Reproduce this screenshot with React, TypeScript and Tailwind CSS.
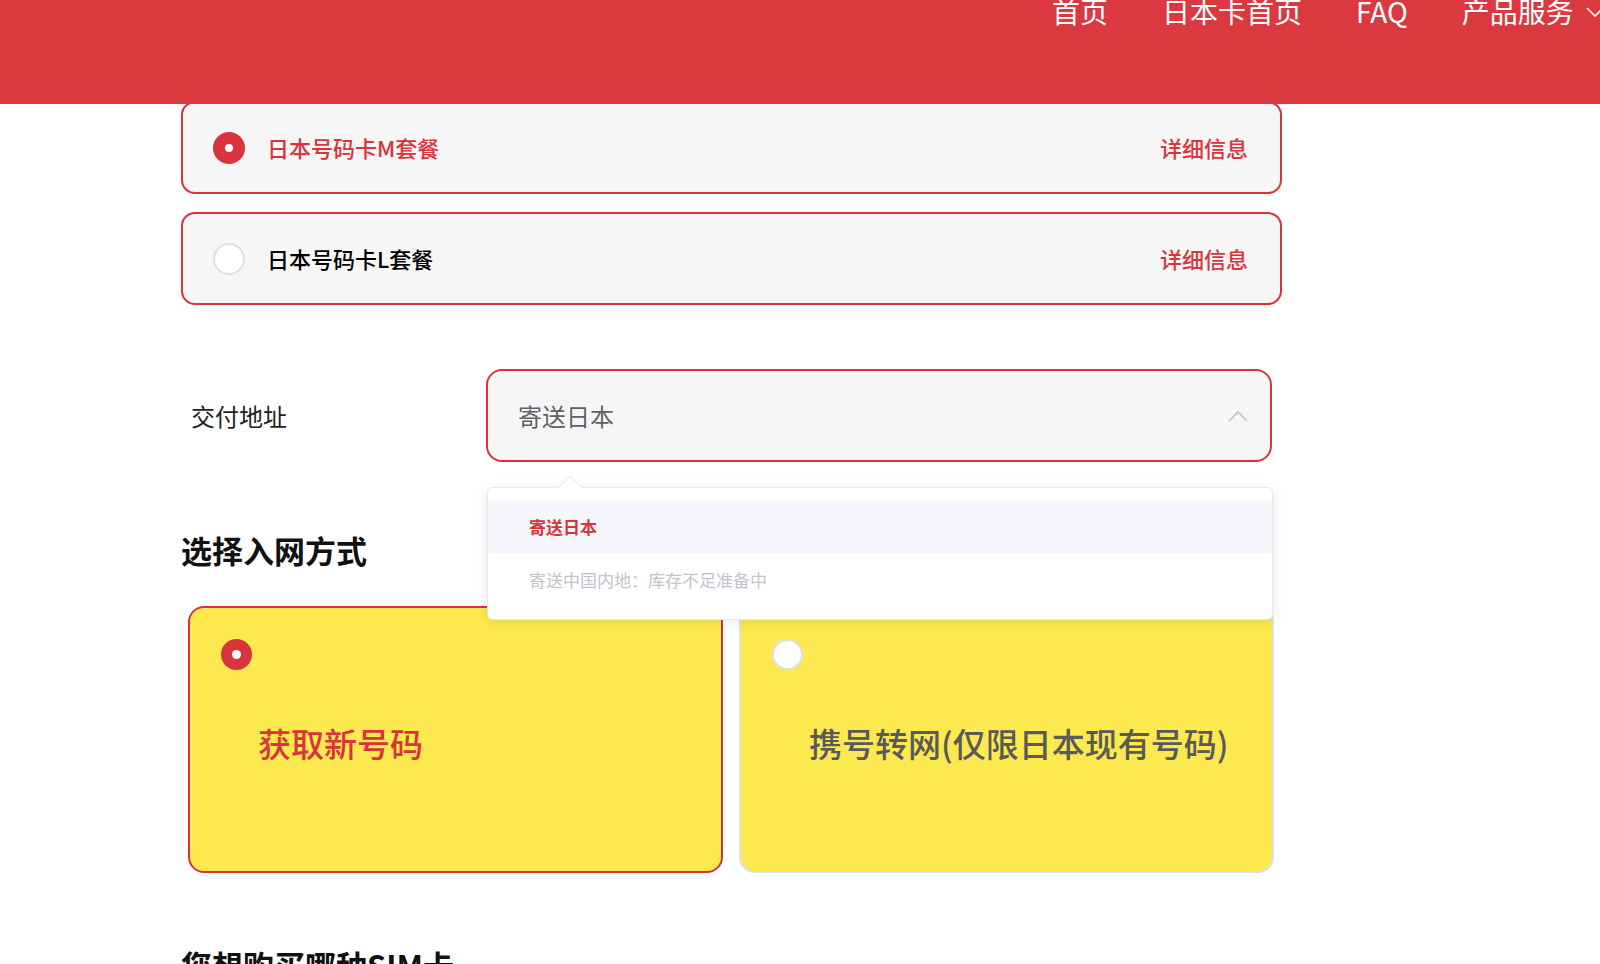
import React from "react";

function PlanRadio({ checked }: { checked: boolean }) {
  return checked ? (
    <span className="flex h-[32px] w-[32px] shrink-0 items-center justify-center rounded-full bg-[#d9343c]">
      <span className="h-[8px] w-[8px] rounded-full bg-white" />
    </span>
  ) : (
    <span className="h-[32px] w-[32px] shrink-0 rounded-full border-2 border-[#dcdfe6] bg-white" />
  );
}

function CardRadio({ checked }: { checked: boolean }) {
  return checked ? (
    <span className="flex h-[31px] w-[31px] shrink-0 items-center justify-center rounded-full bg-[#d9343c]">
      <span className="h-[9px] w-[9px] rounded-full bg-white" />
    </span>
  ) : (
    <span className="block h-[31px] w-[31px] shrink-0 rounded-full border-2 border-[#dcdfe6] bg-white" />
  );
}

export default function App() {
  return (
    <div className="relative h-[964px] w-[1600px] overflow-hidden bg-white font-['Noto_Sans_CJK_SC','Noto_Sans',sans-serif]">
      <header className="absolute left-0 top-0 z-20 h-[104px] w-full overflow-hidden bg-[#dc3840]">
        <nav className="-mt-[3px] flex items-start gap-[54px] whitespace-nowrap pl-[1052px] text-[28px] leading-[28px] text-white">
          <span>首页</span>
          <span>日本卡首页</span>
          <span>FAQ</span>
          <span className="flex items-start gap-[12px]">
            产品服务
            <svg width="18" height="12" viewBox="0 0 18 12" className="mt-[9px]">
              <path d="M1 2 L9 10 L17 2" fill="none" stroke="white" strokeWidth="1.6" />
            </svg>
          </span>
        </nav>
      </header>

      <main className="pl-[181px] pt-[101px]">
        <div className="w-[1101px]">
          <div className="flex h-[93px] items-center rounded-[14px] border-2 border-[#d9343c] bg-[#f6f6f6] pl-[30px] pr-[32px]">
            <PlanRadio checked />
            <span className="ml-[22px] text-[22px] font-medium text-[#d9343c]">日本号码卡M套餐</span>
            <span className="ml-auto text-[22px] font-medium text-[#d9343c]">详细信息</span>
          </div>
          <div className="mt-[18px] flex h-[93px] items-center rounded-[14px] border-2 border-[#d9343c] bg-[#f6f6f6] pl-[30px] pr-[32px]">
            <PlanRadio checked={false} />
            <span className="ml-[22px] text-[22px] font-medium text-black">日本号码卡L套餐</span>
            <span className="ml-auto text-[22px] font-medium text-[#d9343c]">详细信息</span>
          </div>

          <div className="mt-[64px] flex items-center">
            <div className="w-[305px] pl-[10px] text-[24px] text-[#222]">交付地址</div>
            <div className="relative">
              <div className="flex h-[93px] w-[786px] items-center rounded-[16px] border-2 border-[#d9343c] bg-[#f6f6f6] pl-[30px] pr-[22px]">
                <span className="text-[24px] text-[#606266]">寄送日本</span>
                <svg width="20" height="12" viewBox="0 0 20 12" className="ml-auto">
                  <path d="M1 11 L10 2 L19 11" fill="none" stroke="#c0c4cc" strokeWidth="1.6" />
                </svg>
              </div>
              <div className="absolute left-[1px] top-[118px] z-10 w-[786px] rounded-[6px] border border-[#e4e7ed] bg-white pb-[13px] pt-[12px] shadow-[0_2px_12px_0_rgba(0,0,0,0.1)]">
                <svg width="24" height="13" viewBox="0 0 24 13" className="absolute left-[70px] top-[-13px]">
                  <path d="M0 13 L12 1 L24 13 Z" fill="white" />
                  <path d="M0.5 12.5 L12 1 L23.5 12.5" fill="none" stroke="#e4e7ed" strokeWidth="1" />
                </svg>
                <div className="flex h-[53px] items-center bg-[#f5f7fa] pl-[41px] text-[17px] font-bold text-[#d9343c]">寄送日本</div>
                <div className="flex h-[53px] items-center pl-[41px] text-[17px] text-[#c0c4cc]">寄送中国内地：库存不足准备中</div>
              </div>
            </div>
          </div>

          <h2 className="mt-[68px] h-[40px] text-[31px] font-bold leading-[40px] text-[#111]">选择入网方式</h2>

          <div className="ml-[7px] mt-[36px] grid w-[1086px] grid-cols-2 gap-[16px]">
            <div className="flex h-[267px] flex-col rounded-[16px] border-2 border-[#d9343c] bg-[#fbe94f]">
              <div className="ml-[31px] mt-[31px]">
                <CardRadio checked />
              </div>
              <div className="ml-[68px] mt-[53px] h-[40px] text-[33px] font-medium leading-[40px] text-[#d9343c]">获取新号码</div>
            </div>
            <div className="flex h-[267px] flex-col rounded-[16px] border-2 border-[#dcdfe6] bg-[#fbe94f]">
              <div className="ml-[31px] mt-[31px]">
                <CardRadio checked={false} />
              </div>
              <div className="ml-[68px] mt-[53px] h-[40px] text-[33px] font-medium leading-[40px] text-[#5a5a5a]">携号转网(仅限日本现有号码)</div>
            </div>
          </div>

          <h2 className="mt-[72px] h-[40px] text-[31px] font-bold leading-[40px] text-[#111]">您想购买哪种SIM卡</h2>
        </div>
      </main>
    </div>
  );
}
